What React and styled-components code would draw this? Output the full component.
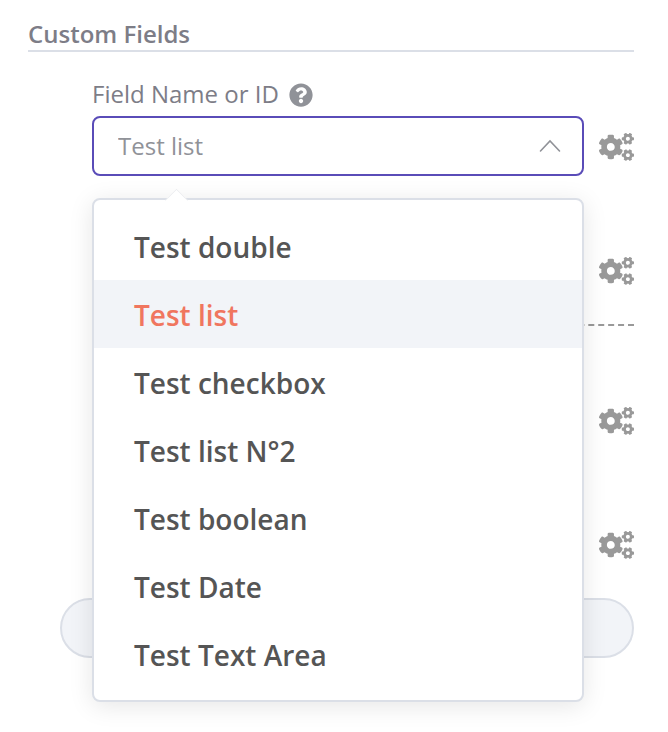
import React, { useState } from 'react';
import styled, { createGlobalStyle } from 'styled-components';
import { FaCogs, FaQuestionCircle } from 'react-icons/fa';

const options = [
  'Test double',
  'Test list',
  'Test checkbox',
  'Test list N°2',
  'Test boolean',
  'Test Date',
  'Test Text Area',
];

export default function App() {
  const [selected, setSelected] = useState('Test list');
  const [open, setOpen] = useState(true);

  const toggle = (e) => {
    // our own list replaces the native popup
    e.preventDefault();
    setOpen(!open);
  };

  const pick = (option) => {
    setSelected(option);
    setOpen(false);
  };

  return (
    <Panel>
      <GlobalStyle />
      <Title>Custom Fields</Title>
      <Fields>
        <Item>
          <LabelRow>
            <label htmlFor="field">Field Name or ID</label>
            <FaQuestionCircle />
          </LabelRow>
          <Row>
            <Control>
              <Select
                id="field"
                value={selected}
                onMouseDown={toggle}
                onChange={(e) => setSelected(e.target.value)}
              >
                {options.map((option) => (
                  <option key={option}>{option}</option>
                ))}
              </Select>
              <Chevron $open={open} viewBox="0 0 22 14">
                <path d="M1.5 12 L11 2 L20.5 12" />
              </Chevron>
              {open && (
                <Dropdown>
                  {options.map((option) => (
                    <li key={option}>
                      <Option
                        type="button"
                        $active={option === selected}
                        onClick={() => pick(option)}
                      >
                        {option}
                      </Option>
                    </li>
                  ))}
                </Dropdown>
              )}
            </Control>
            <Options />
          </Row>
        </Item>
        <ValueField label="Field value" />
        <Separator />
        <ValueField label="Second field name" />
        <ValueField label="Second field value" />
      </Fields>
      <AddButton type="button" aria-label="Add custom field" />
    </Panel>
  );
}

function ValueField({ label }) {
  return (
    <Item>
      <LabelRow />
      <Row>
        <Control>
          <Input type="text" aria-label={label} />
        </Control>
        <Options />
      </Row>
    </Item>
  );
}

function Options() {
  return (
    <OptionsButton type="button" aria-label="Parameter options">
      <FaCogs />
    </OptionsButton>
  );
}

// Styled components

const GlobalStyle = createGlobalStyle`
  * {
    box-sizing: border-box;
  }

  body {
    margin: 0;
    background: #ffffff;
    color: #7d7d87;
    font-family: 'Open Sans', sans-serif;
    font-size: 24px;
  }

  button, input, select {
    font: inherit;
  }
`;

const Panel = styled.main`
  min-height: 100vh;
  padding: 18px 34px 32px 28px;
`;

const Title = styled.h2`
  margin: 0;
  border-bottom: 2px solid #dbdfe7;
  font-size: 24px;
  font-weight: 600;
  line-height: 32px;
`;

const Fields = styled.div`
  display: flex;
  flex-direction: column;
  gap: 24px;
  padding: 24px 0 24px 64px;
`;

const Item = styled.div`
  display: flex;
  flex-direction: column;
`;

const LabelRow = styled.div`
  display: flex;
  align-items: center;
  gap: 10px;
  height: 40px;
  padding-bottom: 2px;
  line-height: 32px;

  label {
    padding-bottom: 2px;
  }

  svg {
    color: #909298;
  }
`;

const Row = styled.div`
  display: flex;
  align-items: center;
  gap: 15px;
`;

const Control = styled.div`
  position: relative;
  flex: 1;
`;

const Select = styled.select`
  display: block;
  width: 100%;
  height: 60px;
  padding: 0 60px 2px 24px;
  appearance: none;
  background: #ffffff;
  border: 2px solid #5a4cb8;
  border-radius: 8px;
  outline: none;
  color: #909298;
  cursor: pointer;
`;

const Chevron = styled.svg`
  position: absolute;
  top: 23px;
  right: 23px;
  width: 22px;
  height: 14px;
  fill: none;
  stroke: #909298;
  stroke-width: 1.6;
  stroke-linecap: round;
  pointer-events: none;
  transform: ${({ $open }) => ($open ? 'none' : 'rotate(180deg)')};
`;

const Dropdown = styled.ul`
  position: absolute;
  z-index: 1;
  top: calc(100% + 22px);
  left: 0;
  width: 100%;
  margin: 0;
  padding: 12px 0;
  list-style: none;
  background: #ffffff;
  border: 2px solid #dbdfe7;
  border-radius: 8px;
  box-shadow: 0 4px 24px rgba(0, 0, 0, 0.1);

  &::before {
    content: '';
    position: absolute;
    top: -8px;
    left: 74px;
    width: 16px;
    height: 16px;
    background: #ffffff;
    border: 1px solid #ebedf0;
    border-right: none;
    border-bottom: none;
    transform: rotate(45deg);
    clip-path: polygon(0 0, 100% 0, 0 100%);
  }
`;

const Option = styled.button`
  display: block;
  width: 100%;
  height: 68px;
  padding: 2px 40px 0;
  border: none;
  background: ${({ $active }) => ($active ? '#f2f4f8' : '#ffffff')};
  color: ${({ $active }) => ($active ? '#f0765f' : '#555555')};
  font-size: 28px;
  font-weight: 600;
  text-align: left;
  cursor: pointer;

  &:hover {
    background: #f2f4f8;
  }
`;

const Input = styled.input`
  display: block;
  width: 100%;
  height: 60px;
  padding: 0 24px;
  border: 2px solid #dbdfe7;
  border-radius: 8px;
  color: #909298;
`;

const OptionsButton = styled.button`
  display: flex;
  padding: 2px 0 0;
  border: none;
  background: none;
  color: #999999;
  cursor: pointer;

  svg {
    width: 35px;
    height: 28px;
  }
`;

const Separator = styled.div`
  border-top: 2px dashed #999999;
`;

const AddButton = styled.button`
  display: block;
  width: calc(100% - 32px);
  height: 60px;
  margin-left: 32px;
  background: #f2f4f8;
  border: 2px solid #dbdfe7;
  border-radius: 30px;
  cursor: pointer;
`;
